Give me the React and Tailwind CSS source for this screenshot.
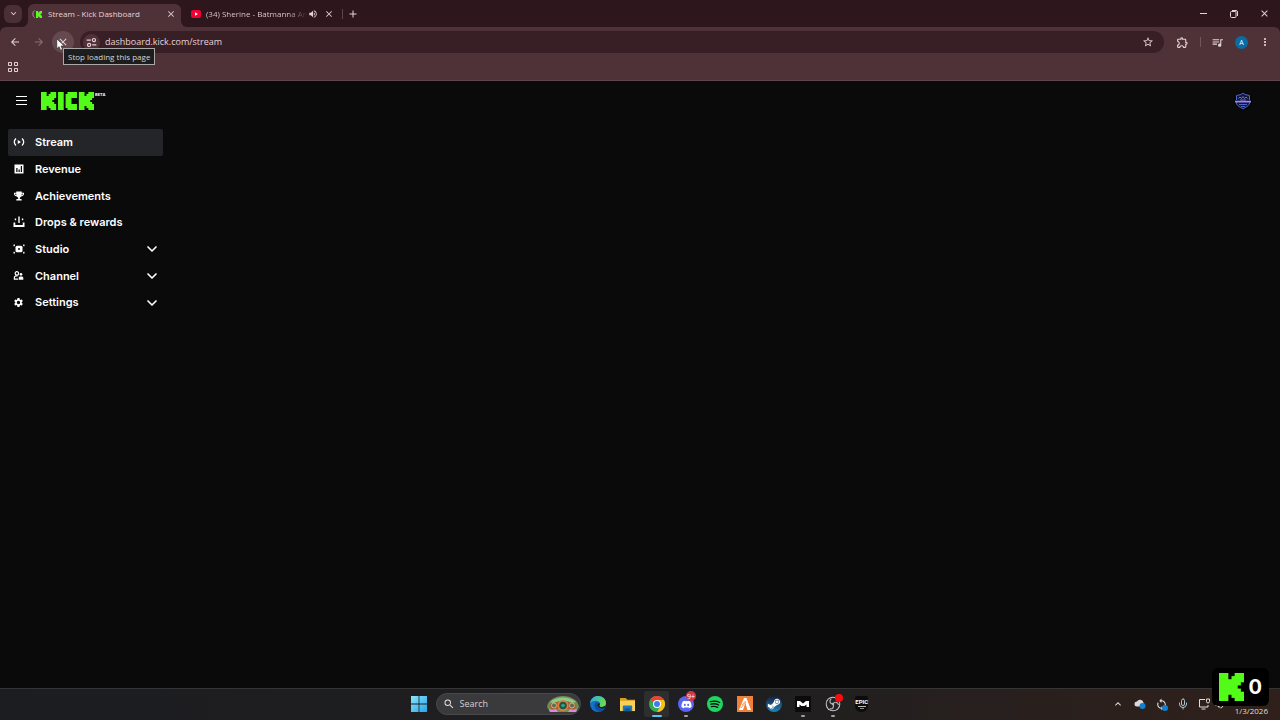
import React, { useState } from 'react';
import {
    MdArrowBack,
    MdArrowForward,
    MdClose,
    MdExpandMore,
    MdExpandLess,
    MdOutlineExtension,
    MdQueueMusic,
    MdStarBorder,
    MdMoreVert,
    MdAdd,
    MdVolumeUp,
    MdSettings,
    MdSync,
    MdSearch,
} from 'react-icons/md';
import { FaDiscord, FaTrophy, FaSteamSymbol } from 'react-icons/fa';
import { ChevronDown, Mic } from 'lucide-react';

/* --- Kick branding --- */
// Blocks overlap on purpose so that no seam shows between them
const K_BLOCKS = [
    [0, 0, 3, 9],
    [1, 2, 4, 5],
    [4, 1, 2, 7],
    [5, 0, 3, 3],
    [5, 2, 2, 2],
    [5, 5, 2, 2],
    [5, 6, 3, 3],
];

const WORDMARK_BLOCKS = [
    ...K_BLOCKS,
    [9, 0, 3, 9],
    [13, 1, 3, 7],
    [14, 0, 2, 9],
    [15, 0, 4, 3],
    [15, 6, 4, 3],
    ...K_BLOCKS.map(([x, y, w, h]) => [x + 20, y, w, h]),
];

const Blocks = ({ blocks, cols, className, label }) => (
    <svg viewBox={`0 0 ${cols} 9`} preserveAspectRatio="none" className={className} role="img" aria-label={label}>
        {blocks.map(([x, y, w, h]) => (
            <rect key={`${x}-${y}`} x={x} y={y} width={w} height={h} fill="#53fc18" />
        ))}
    </svg>
);

/* --- Sidebar icons --- */
const StreamIcon = () => (
    <svg viewBox="0 0 24 24" className="size-3" fill="none" stroke="currentColor" strokeWidth="2.600">
        <path d="M6 5C1.500 9 1.500 15 6 19M18 5c4.500 4 4.500 10 0 14" />
        <path d="M9.500 8v8l6.500-4z" fill="currentColor" stroke="none" />
    </svg>
);

const RevenueIcon = () => (
    <svg viewBox="0 0 24 24" className="size-3">
        <path fill="currentColor" fillRule="evenodd" d="M3 3h18v18H3zM6.500 10v8h2.500v-8zM11 13v5h2.500v-5zM15.500 6v12H18V6z" />
    </svg>
);

const DropsIcon = () => (
    <svg viewBox="0 0 24 24" className="size-3" fill="currentColor">
        <path d="M1 13h3.500v5h15v-5H23v9H1zM10.600 1h2.800v13h-2.800zM3.500 5h2.800v3.500H3.500zM17.700 5h2.800v3.500h-2.800z" />
    </svg>
);

const StudioIcon = () => (
    <svg viewBox="0 0 24 24" className="size-3">
        <path fill="currentColor" d="M1 3h3v2.500H3V6.500H1zM20 3h3v3.500h-2V5.500h-1zM1 17.500h2v1h1V21H1zM21 17.500h2V21h-3v-2.500h1z" />
        <rect x="5" y="5.500" width="14" height="13" rx="3" fill="currentColor" />
        <circle cx="12" cy="12" r="2" fill="#0b0b0b" />
    </svg>
);

const ChannelIcon = () => (
    <svg viewBox="0 0 24 24" className="size-[11px]" fill="none" stroke="currentColor" strokeWidth="2.600">
        <circle cx="8.500" cy="7.500" r="3.800" />
        <path d="M3 21v-4.500c0-2 1.500-3.500 4-3.500h3M3 20h8" />
        <circle cx="17.500" cy="9.500" r="2.800" fill="currentColor" stroke="none" />
        <path d="M12.500 21v-4l2-3h6l2 3v4z" fill="currentColor" stroke="none" />
    </svg>
);

const NAV_ITEMS = [
    { name: 'Stream', icon: <StreamIcon /> },
    { name: 'Revenue', icon: <RevenueIcon /> },
    { name: 'Achievements', icon: <FaTrophy className="size-[10px]" /> },
    { name: 'Drops & rewards', icon: <DropsIcon /> },
    { name: 'Studio', icon: <StudioIcon />, expandable: true },
    { name: 'Channel', icon: <ChannelIcon />, expandable: true },
    { name: 'Settings', icon: <MdSettings className="size-[11px]" />, expandable: true },
];

/* --- Browser chrome --- */
const KickFavicon = () => (
    <span className="flex items-center gap-px">
        <svg viewBox="0 0 3 8" className="h-2 w-[3px]" fill="none" stroke="#a9989c">
            <path d="M2.500 .5C.3 2.500.3 5.500 2.500 7.500" />
        </svg>
        <Blocks blocks={K_BLOCKS} cols={8} className="h-[7px] w-[6px]" label="Kick" />
    </span>
);

const YouTubeIcon = () => (
    <svg viewBox="0 0 10 8" className="h-2 w-[10px] shrink-0">
        <rect width="10" height="8" rx="2" fill="#f00033" />
        <path d="M4 2.300v3.400L7 4z" fill="#fff" />
    </svg>
);

const SiteInfoIcon = () => (
    <svg viewBox="0 0 16 16" className="size-[11px]" fill="none" stroke="currentColor" strokeWidth="1.700">
        <path d="M1 4.500h6M9 11.500h6" />
        <circle cx="11.500" cy="4.500" r="2.300" />
        <circle cx="4.500" cy="11.500" r="2.300" />
    </svg>
);

const BrowserHeader = () => {
    const [address, setAddress] = useState('dashboard.kick.com/stream');

    return (
        <header className="bg-[#2d171c] text-[#e6d3d7]">
            {/* Tab strip */}
            <div className="flex h-[27px] bg-[#4f3238]">
                <div className="flex w-7 shrink-0 items-center rounded-br-md bg-[#2d171c] pl-1">
                    <button aria-label="Search tabs" className="flex size-[18px] items-center justify-center rounded-md bg-[#4b2f36]">
                        <MdExpandMore className="size-[11px]" />
                    </button>
                </div>
                <div className="w-[153px] shrink-0 bg-[#2d171c] pt-1">
                    <div className="flex h-full items-center rounded-t-md bg-[#4f3238] pr-[5px] pb-[3px] pl-1">
                        <KickFavicon />
                        <span className="ml-[6px] flex-1 text-[8px] whitespace-nowrap">Stream - Kick Dashboard</span>
                        <button aria-label="Close tab"><MdClose className="size-[10px]" /></button>
                    </div>
                </div>
                <div className="flex min-w-0 flex-1 items-center rounded-bl-md bg-[#2d171c] pr-px pl-[10px]">
                    <YouTubeIcon />
                    <span className="ml-[5px] w-[102px] bg-linear-to-r from-[#e6d3d7] from-80% to-[#2d171c] bg-clip-text text-[8px] whitespace-nowrap text-transparent">
                        (34) Sherine - Batmanna An
                    </span>
                    <button aria-label="Mute tab"><MdVolumeUp className="size-[10px]" /></button>
                    <button aria-label="Close tab" className="ml-[6px]"><MdClose className="size-[10px]" /></button>
                    <span className="ml-2 h-[10px] w-px bg-[#5d434a]" />
                    <button aria-label="New tab" className="ml-1"><MdAdd className="size-3" /></button>
                    <div className="ml-auto flex">
                        <button aria-label="Minimize" className="flex w-[30px] items-center justify-center">
                            <span className="h-px w-[7px] bg-current" />
                        </button>
                        <button aria-label="Restore" className="flex w-[31px] items-center justify-center">
                            <svg viewBox="0 0 8 8" className="size-2" fill="none" stroke="currentColor">
                                <rect x=".5" y="1.500" width="5.500" height="6" rx="1" />
                                <path d="M2 .5h4q1.500 0 1.500 1.500v4" />
                            </svg>
                        </button>
                        <button aria-label="Close" className="flex w-[30px] items-center justify-center">
                            <MdClose className="size-[11px]" />
                        </button>
                    </div>
                </div>
            </div>

            {/* Toolbar */}
            <div className="rounded-t-md border-b border-[#5c464b] bg-[#4f3238]">
                <div className="flex h-[30px] items-center pl-[9px]">
                    <button aria-label="Back" className="mr-3"><MdArrowBack className="size-3" /></button>
                    <button aria-label="Forward" className="mr-[7px] text-[#8a6f76]"><MdArrowForward className="size-3" /></button>
                    <button aria-label="Stop loading" className="flex size-[22px] items-center justify-center rounded-full bg-[#66494f]">
                        <MdClose className="size-3" />
                    </button>
                    <div className="ml-[6px] flex h-[22px] flex-1 items-center rounded-full bg-[#381f25] pr-[10px] pl-[3px]">
                        <button aria-label="View site information" className="flex size-[17px] items-center justify-center rounded-full bg-[#503238]">
                            <SiteInfoIcon />
                        </button>
                        <input
                            type="text"
                            aria-label="Address"
                            value={address}
                            onChange={e => setAddress(e.target.value)}
                            className="ml-[5px] min-w-0 flex-1 bg-transparent text-[9px] outline-none"
                        />
                        <button aria-label="Bookmark"><MdStarBorder className="size-3" /></button>
                    </div>
                    <button aria-label="Extensions" className="ml-3"><MdOutlineExtension className="size-[13px]" /></button>
                    <span className="ml-[11px] h-[10px] w-px bg-[#71555c]" />
                    <button aria-label="Media controls" className="ml-[10px]"><MdQueueMusic className="size-[13px]" /></button>
                    <button aria-label="Profile" className="ml-[11px] size-[13px] rounded-full bg-[#086da5] text-[7px] leading-none text-white">A</button>
                    <button aria-label="Menu" className="mr-[9px] ml-[11px]"><MdMoreVert className="size-3" /></button>
                </div>
                <div className="flex h-[23px] items-center pb-[3px] pl-2">
                    <button aria-label="Apps">
                        <svg viewBox="0 0 10 10" className="size-[10px]" fill="none" stroke="currentColor">
                            <path d="M.5.5h3v3h-3zM6.500.5h3v3h-3zM.5 6.500h3v3h-3zM6.500 6.500h3v3h-3z" />
                        </svg>
                    </button>
                </div>
            </div>
        </header>
    );
};

/* --- Dashboard page --- */
const Dashboard = () => {
    const [active, setActive] = useState('Stream');

    return (
        <main className="flex-1 bg-[#0a0a0a] font-['Inter',sans-serif] text-white">
            <div className="flex h-[39px] items-center pr-7 pl-4">
                <button aria-label="Toggle menu" className="flex w-[11px] flex-col gap-[3px]">
                    <span className="h-px bg-white" />
                    <span className="h-px bg-white" />
                    <span className="h-px bg-white" />
                </button>
                <a href="#home" className="ml-[14px] flex items-start">
                    <Blocks blocks={WORDMARK_BLOCKS} cols={28} className="h-[18px] w-[53px]" label="Kick" />
                    <span className="ml-px text-[4px] leading-[5px] font-bold">BETA</span>
                </a>
                <button aria-label="Account" className="ml-auto">
                    <svg viewBox="0 0 18 18" className="size-[18px]">
                        <circle cx="9" cy="9" r="9" fill="#050409" />
                        <path d="M9 1l2 1.500 4.500 1v7.500c0 3-4 4-6.500 6-2.500-2-6.500-3-6.500-6V3.500l4.500-1z" fill="#151638" stroke="#5a63c8" />
                        <path d="M4.500 6.500L6 5l1.500 1.500L9 4.500l1.500 2L12 5l1.500 1.500" fill="none" stroke="#3f87d8" />
                        <path d="M1 8h16v2.500H1z" fill="#292a70" />
                        <path d="M1 9.800h16" stroke="#c3c6f4" />
                        <path d="M6 8h6" stroke="#9a55c4" />
                        <path d="M5 12.500h8M7 14.500h4" stroke="#4c65c6" />
                    </svg>
                </button>
            </div>

            <nav className="grid h-[196px] w-[171px] auto-rows-fr px-2 pt-[9px]">
                {NAV_ITEMS.map(item => (
                    <button
                        key={item.name}
                        onClick={() => setActive(item.name)}
                        className={
                            'flex items-center rounded-xs pr-[3px] pl-1 text-[11px] font-semibold ' +
                            (active === item.name ? 'bg-[#232529]' : '')
                        }
                    >
                        <span className="flex w-[13px] justify-center">{item.icon}</span>
                        <span className="ml-[10px]">{item.name}</span>
                        {item.expandable && <ChevronDown className="ml-auto size-4" strokeWidth={2.5} />}
                    </button>
                ))}
            </nav>
        </main>
    );
};

/* --- Taskbar --- */
const WindowsIcon = () => (
    <svg viewBox="0 0 16 16" className="size-4">
        <defs>
            <linearGradient id="win" x1="0" y1="0" x2="1" y2="1">
                <stop offset="0" stopColor="#8be4fb" />
                <stop offset="1" stopColor="#25a5e6" />
            </linearGradient>
        </defs>
        <path fill="url(#win)" d="M0 0h7.600v7.600H0zM8.400 0H16v7.600H8.400zM0 8.400h7.600V16H0zM8.400 8.400H16V16H8.400z" />
    </svg>
);

const SearchArt = () => (
    <svg viewBox="0 0 34 18" className="h-[18px] w-[34px]">
        <path d="M1 12C2 5 9 1 17 1s15 4 16 11l-3 5H4z" fill="#6f8f55" />
        <path d="M4 7c6-6 20-6 26 0l-4 1c-5-3-13-3-18 0z" fill="#8fc98a" />
        <path d="M3 10l8-3h12l8 3-2 4H5z" fill="#a8612f" />
        <circle cx="8" cy="10.500" r="2.500" fill="#5c6b62" stroke="#d7b06a" />
        <circle cx="26" cy="10.500" r="2.500" fill="#5c6b62" stroke="#d7b06a" />
        <circle cx="17" cy="10.500" r="5.500" fill="#e2803a" />
        <circle cx="17" cy="10.500" r="3.800" fill="#24534a" />
        <circle cx="17" cy="10.500" r="1.800" fill="#2fa583" />
        <path d="M3 14l4 1 3-1 2 3H4zM22 17l2-3 3 1 4-1-1 3z" fill="#d88ae0" />
    </svg>
);

const EdgeIcon = () => (
    <svg viewBox="0 0 24 24" className="size-4">
        <defs>
            <linearGradient id="edge-top" x1="0" y1="0" x2="1" y2="0.4">
                <stop offset="0" stopColor="#2aa8e8" />
                <stop offset="1" stopColor="#6adb4f" />
            </linearGradient>
        </defs>
        <circle cx="12" cy="12" r="12" fill="#1470c9" />
        <path d="M0 11C1 4 6 0 12 0c7 0 12 5 12 10.500 0 4-3 6-6 6-2.500 0-4-1-4-2 0-.8 1.200-1.300 1.200-3.200C15.200 8.500 12 7 8.500 7 4.500 7 1.500 8.500 0 11z" fill="url(#edge-top)" />
        <path d="M9 9.500c-5 4-2 12 5 14 4-.5 7-3 8.500-6-6 3-12 0-12-4 0-1.500.5-3 1.500-4z" fill="#0c4f9e" />
        <path d="M14 14.500c0 1 1.500 2 4 2 2 0 4-.9 5-2.500 0 2-.4 3-1 4-5 2-11-.5-11-4 0-1.500.7-2.600 1.800-3.400 2 .4 2.400 1.800 1.800 2.700z" fill="#1d1d1f" />
    </svg>
);

const FolderIcon = () => (
    <svg viewBox="0 0 18 16" className="h-[15px] w-[17px]">
        <path d="M1 1h6l2 2h8v4H1z" fill="#dc9c1c" />
        <path d="M1 4h16v11H1z" fill="#fbd058" />
        <path d="M4 10q0-1 1-1h8q1 0 1 1v5H4z" fill="#2079bd" />
        <path d="M6 12h6v3H6z" fill="#15598f" />
    </svg>
);

const ChromeIcon = () => (
    <svg viewBox="0 0 24 24" className="size-4">
        <circle cx="12" cy="12" r="12" fill="#34a853" />
        <path d="M12 12L1.600 6A12 12 0 0 1 22.400 6z" fill="#ea4335" />
        <path d="M12 6h10.400A12 12 0 0 1 12 24l5.200-9z" fill="#fbc116" />
        <circle cx="12" cy="12" r="6" fill="#fff" />
        <circle cx="12" cy="12" r="4.500" fill="#3b7ded" />
    </svg>
);

const DiscordIcon = () => (
    <span className="relative flex size-4 items-center justify-center rounded-full bg-[#5865f2]">
        <FaDiscord className="size-[11px] text-white" />
        <span className="absolute -top-[5px] left-2 flex size-[10px] items-center justify-center rounded-full bg-[#d83448] text-[7px] leading-none text-white">9+</span>
    </span>
);

const SpotifyIcon = () => (
    <svg viewBox="0 0 24 24" className="size-4">
        <circle cx="12" cy="12" r="12" fill="#1ed760" />
        <path d="M5 8.500c5-1.500 10-1 14 1.200M6 12.300c4-1.100 8-.7 11.500 1.200M6.500 16c3.500-.9 6.500-.5 9.500 1" fill="none" stroke="#111" strokeWidth="2" strokeLinecap="round" />
    </svg>
);

const FiveMIcon = () => (
    <svg viewBox="0 0 16 16" className="size-4">
        <rect width="16" height="16" fill="#f0813a" />
        <path d="M7 2h2.500L14 14h-3.500L8.300 7 6 14H2z" fill="#fff" />
        <path d="M5 9l3.500-4M4 12l5-6" stroke="#f0813a" strokeWidth=".8" />
    </svg>
);

const SteamIcon = () => (
    <span className="flex size-4 items-center justify-center rounded-full bg-linear-to-b from-[#14213f] to-[#1a86bd]">
        <FaSteamSymbol className="size-[14px] text-white" />
    </span>
);

const CaptureIcon = () => (
    <svg viewBox="0 0 16 16" className="size-4">
        <rect width="16" height="16" rx="1" fill="#0b0b0b" />
        <path d="M2 5h3l3 2.500L11 5h3v6h-2.500V8.500L9.500 10h-3l-2-1.500V11H2z" fill="#fff" />
    </svg>
);

const ObsIcon = () => (
    <span className="relative">
        <svg viewBox="0 0 24 24" className="size-4">
            <circle cx="12" cy="12" r="11" fill="#c9c9c9" />
            <circle cx="12" cy="12" r="9.500" fill="#222126" />
            <path d="M12 12C7 12 6 7 9.500 4M12 12c2.500-4.300 7.500-3 8.300 1.500M12 12c2.500 4.300-1 8.500-5 7" fill="none" stroke="#b5b5b5" strokeWidth="1.800" />
            <circle cx="12" cy="12" r="2" fill="#b5b5b5" />
        </svg>
        <span className="absolute -top-[2px] left-[10px] size-2 rounded-full bg-[#fb0d0d]" />
    </span>
);

const EpicIcon = () => (
    <span className="flex h-4 w-[13px] flex-col items-center rounded-xs rounded-b-md bg-[#0c0c0c] pt-[2px] text-white">
        <span className="font-['Roboto',sans-serif] text-[6px] leading-[7px] font-bold">EPIC</span>
        <span className="mt-px h-px w-2 bg-[#bdbdbd]" />
        <span className="mt-px h-px w-1 bg-[#8d8d8d]" />
    </span>
);

const APPS = [
    { name: 'Edge', icon: <EdgeIcon /> },
    { name: 'File Explorer', icon: <FolderIcon /> },
    { name: 'Chrome', icon: <ChromeIcon />, focused: true },
    { name: 'Discord', icon: <DiscordIcon />, running: true },
    { name: 'Spotify', icon: <SpotifyIcon /> },
    { name: 'FiveM', icon: <FiveMIcon /> },
    { name: 'Steam', icon: <SteamIcon /> },
    { name: 'Capture', icon: <CaptureIcon />, running: true },
    { name: 'OBS', icon: <ObsIcon />, running: true },
    { name: 'Epic Games', icon: <EpicIcon /> },
];

const Taskbar = () => (
    <footer className="grid h-8 grid-cols-[1fr_auto_1fr] border-t border-[#363536] bg-linear-to-r from-[#1c1d20] via-[#201f20] via-60% to-[#30201b] pb-px text-[#dedede]">
        <div className="col-start-2 flex items-center">
            <button aria-label="Start" className="flex w-[30px] justify-center"><WindowsIcon /></button>
            <label className="ml-[2px] flex h-[22px] w-[145px] items-center rounded-full border border-[#48484a] bg-[#3a3a3d] pl-[6px]">
                <MdSearch className="size-3 shrink-0" />
                <input
                    type="text"
                    aria-label="Search"
                    placeholder="Search"
                    className="ml-[5px] min-w-0 flex-1 bg-transparent text-[9px] outline-none placeholder:text-[#d0d0d0]"
                />
                <SearchArt />
            </label>
            <div className="ml-[3px] grid h-full w-[293px] grid-cols-10">
                {APPS.map(app => (
                    <button
                        key={app.name}
                        aria-label={app.name}
                        className={'relative m-[2px] flex items-center justify-center rounded-xs ' + (app.focused ? 'bg-[#2e2e30]' : '')}
                    >
                        {app.icon}
                        {app.focused && <span className="absolute bottom-0 h-[2px] w-[10px] rounded-full bg-[#58c4f0]" />}
                        {app.running && <span className="absolute bottom-0 h-[2px] w-1 rounded-full bg-[#a0a0a0]" />}
                    </button>
                ))}
            </div>
        </div>
        <div className="flex items-center justify-self-end pr-3">
            <MdExpandLess className="size-3" />
            <svg viewBox="0 0 12 12" className="ml-[10px] size-3">
                <path d="M3 8.500a2.500 2.500 0 0 1 0-5 3.500 3.500 0 0 1 6.500 1.200L10 8.500z" fill="#dad8d8" />
                <circle cx="8.500" cy="8" r="3" fill="#147fd0" />
            </svg>
            <span className="relative ml-[9px]">
                <MdSync className="size-[13px]" />
                <span className="absolute right-0 bottom-0 size-[6px] rounded-full bg-[#147fd0]" />
            </span>
            <Mic className="ml-[9px] size-3 text-[#a7c6cc]" />
            <svg viewBox="0 0 12 12" className="ml-[9px] size-3" fill="none" stroke="currentColor">
                <path d="M7 1.500H1.500v7.500H10V7M3.500 11h4" />
                <path d="M8.500 1v2.500q0 1.500 1.500 1.500t1.500-1.500V1z" />
            </svg>
            <MdVolumeUp className="ml-1 size-[11px]" />
            <span className="ml-[10px] self-end pb-[2px] text-[8px] leading-3">1/3/2026</span>
        </div>
    </footer>
);

export default function App() {
    return (
        <div className="relative flex min-h-screen flex-col overflow-hidden bg-[#0a0a0a] font-['Open_Sans','Noto_Sans',sans-serif]">
            <BrowserHeader />
            <Dashboard />
            <Taskbar />

            {/* Hover tooltip and pointer */}
            <div role="tooltip" className="absolute top-12 left-[63px] border border-[#a9a9a9] bg-[#1d1d1d] px-1 text-[8px] leading-[15px] text-[#d5d5d5]">
                Stop loading this page
            </div>
            <svg viewBox="0 0 9 13" className="absolute top-[38px] left-[56px] h-[13px] w-[9px]">
                <path d="M.8.800v10l2.300-2.100L4.600 12.300l1.900-.8L5 8h3.200z" fill="#fff" stroke="#222" strokeWidth=".6" />
            </svg>

            {/* Viewer counter */}
            <div className="absolute right-[11px] bottom-[14px] flex h-[38px] w-[57px] items-center justify-between rounded-md bg-black px-[7px]">
                <Blocks blocks={K_BLOCKS} cols={8} className="h-7 w-[25px]" label="Kick" />
                <span className="font-['Inter',sans-serif] text-[20px] leading-none font-bold text-white">0</span>
            </div>
        </div>
    );
}
